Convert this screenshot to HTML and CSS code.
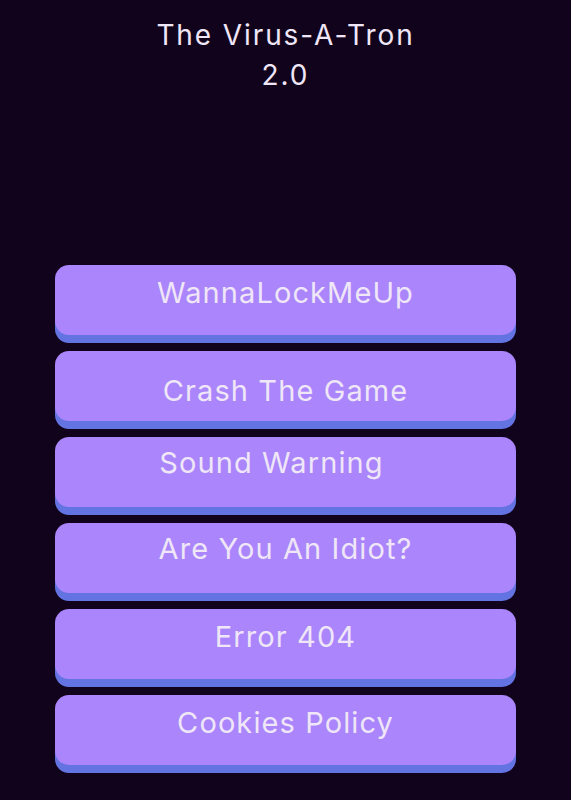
FILE: index.html
```html
<!DOCTYPE html>
<html>
<head>
	<title>The Virus-A-Tron 2.0</title>
	<link rel="stylesheet" href="styles.css">
</head>
<body>
	<h1 class="title">The Virus-A-Tron<br>2.0</h1>

	<div class="menu">
		<button class="virus">WannaLockMeUp</button>
		<button class="virus low">Crash The Game</button>
		<button class="virus shifted">Sound Warning</button>
		<button class="virus">Are You An Idiot?</button>
		<button class="virus">Error 404</button>
		<button class="virus">Cookies Policy</button>
	</div>
</body>
</html>
```

FILE: styles.css
```css
body {
	margin: 0;
	padding: 0;
	background-color: #12031c;
	font-family: Inter, "Noto Sans", sans-serif;
	color: #efe6f7;
}

.title {
	margin: 15px 0 0;
	font-size: 28px;
	font-weight: 400;
	letter-spacing: 1.9px;
	line-height: 40px;
	text-align: center;
}

.menu {
	margin: 170px 55px 28px;
	padding-bottom: 8px;
	display: flex;
	flex-direction: column;
	gap: 16px;
}

.virus {
	height: 70px;
	flex-shrink: 0;
	padding: 11px 0 0;
	border: none;
	border-radius: 14px;
	background-color: #aa85fb;
	box-shadow: 0 8px 0 #6473e2;
	color: #efe6f7;
	font-family: inherit;
	font-size: 29px;
	letter-spacing: 1.1px;
	line-height: 34px;
	display: flex;
	justify-content: center;
	align-items: flex-start;
}

.low {
	padding-top: 23px;
}

.shifted {
	padding-right: 28px;
	padding-top: 9px;
}

.virus:nth-child(4) {
	padding-top: 9px;
}
```
